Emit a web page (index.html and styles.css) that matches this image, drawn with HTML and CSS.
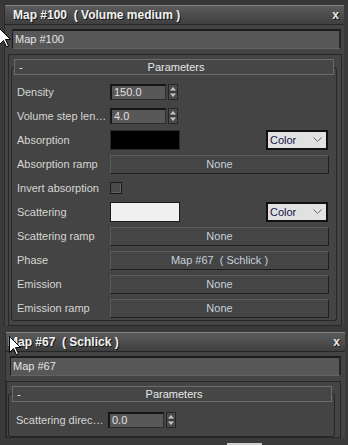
FILE: index.html
```html
<!DOCTYPE html>
<html lang="en">
<head>
    <meta charset="UTF-8">
    <title>Map #100 ( Volume medium )</title>
    <link rel="stylesheet" href="styles.css">
</head>
<body>

    <div class="top-strip"></div>

    <div class="window">
        <div class="titlebar">
            <span class="title">Map #100  ( Volume medium )</span>
            <span class="close">x</span>
        </div>
        <div class="name-field">Map #100</div>

        <div class="panel">
            <div class="rollout">
                <div class="rollout-head">
                    <span class="collapse">-</span>
                    <span class="rollout-title">Parameters</span>
                </div>
                <div class="rows">
                    <div class="param-row">
                        <span class="label">Density</span>
                        <div class="spinner">
                            <span class="num-field">150.0</span>
                            <span class="arrows"><svg width="8" height="14" viewBox="0 0 8 14"><path d="M4 2 L7 5.5 L1 5.5 Z M1 8.5 L7 8.5 L4 12 Z" fill="#c4c4c4"/><line x1="0" y1="7" x2="8" y2="7" stroke="#2a2a2a"/></svg></span>
                        </div>
                    </div>
                    <div class="param-row">
                        <span class="label">Volume step len…</span>
                        <div class="spinner">
                            <span class="num-field">4.0</span>
                            <span class="arrows"><svg width="8" height="14" viewBox="0 0 8 14"><path d="M4 2 L7 5.5 L1 5.5 Z M1 8.5 L7 8.5 L4 12 Z" fill="#c4c4c4"/><line x1="0" y1="7" x2="8" y2="7" stroke="#2a2a2a"/></svg></span>
                        </div>
                    </div>
                    <div class="param-row">
                        <span class="label">Absorption</span>
                        <div class="color-pick">
                            <span class="swatch black"></span>
                            <span class="dropdown">Color<svg width="9" height="6" viewBox="0 0 9 6"><polyline points="0.5,0.5 4.5,4.5 8.5,0.5" fill="none" stroke="#6a6a6a"/></svg></span>
                        </div>
                    </div>
                    <div class="param-row">
                        <span class="label">Absorption ramp</span>
                        <span class="map-btn">None</span>
                    </div>
                    <div class="param-row">
                        <span class="label">Invert absorption</span>
                        <span class="check"></span>
                    </div>
                    <div class="param-row">
                        <span class="label">Scattering</span>
                        <div class="color-pick">
                            <span class="swatch white"></span>
                            <span class="dropdown">Color<svg width="9" height="6" viewBox="0 0 9 6"><polyline points="0.5,0.5 4.5,4.5 8.5,0.5" fill="none" stroke="#6a6a6a"/></svg></span>
                        </div>
                    </div>
                    <div class="param-row">
                        <span class="label">Scattering ramp</span>
                        <span class="map-btn">None</span>
                    </div>
                    <div class="param-row">
                        <span class="label">Phase</span>
                        <span class="map-btn">Map #67  ( Schlick )</span>
                    </div>
                    <div class="param-row">
                        <span class="label">Emission</span>
                        <span class="map-btn">None</span>
                    </div>
                    <div class="param-row">
                        <span class="label">Emission ramp</span>
                        <span class="map-btn">None</span>
                    </div>
                </div>
            </div>
        </div>
    </div>

    <div class="window second">
        <div class="titlebar">
            <span class="title">Map #67  ( Schlick )</span>
            <span class="close">x</span>
        </div>
        <div class="name-field">Map #67</div>

        <div class="panel">
            <div class="rollout">
                <div class="rollout-head">
                    <span class="collapse">-</span>
                    <span class="rollout-title">Parameters</span>
                </div>
                <div class="rows">
                    <div class="param-row">
                        <span class="label">Scattering direc…</span>
                        <div class="spinner">
                            <span class="num-field">0.0</span>
                            <span class="arrows"><svg width="8" height="14" viewBox="0 0 8 14"><path d="M4 2 L7 5.5 L1 5.5 Z M1 8.5 L7 8.5 L4 12 Z" fill="#c4c4c4"/><line x1="0" y1="7" x2="8" y2="7" stroke="#2a2a2a"/></svg></span>
                        </div>
                    </div>
                </div>
            </div>
        </div>
    </div>

    <!-- mouse pointers and the edge of the window below -->
    <svg class="cursor first-cursor" width="13" height="20" viewBox="0 0 13 20"><polygon points="0.5,0.5 0.5,16.5 4.5,12.5 7.5,19 9.5,18 6.5,11.5 11.5,11.5" fill="#fff" stroke="#000"/></svg>
    <svg class="cursor second-cursor" width="13" height="20" viewBox="0 0 13 20"><polygon points="0.5,0.5 0.5,16.5 4.5,12.5 7.5,19 9.5,18 6.5,11.5 11.5,11.5" fill="#fff" stroke="#000"/></svg>
    <div class="peek"></div>

</body>
</html>
```

FILE: styles.css
```css
body {
    margin: 0;
    width: 348px;
    height: 445px;
    overflow: hidden;
    position: relative;
    background-color: #3a3a3a;
    font-family: "Liberation Sans", Arial, sans-serif;
    font-size: 11px;
    color: #d6d6d2;
}
.top-strip {
    height: 5px;
    background-color: #373737;
}
.window {
    margin: 0 4px 0 5px;
    background-color: #444;
    box-shadow: -1px 0 0 #2c2c2c;
}
.window.second {
    margin: 6px 3px 0 6px;
}
.titlebar {
    display: flex;
    align-items: center;
    justify-content: space-between;
    height: 18px;
    padding: 0 5px 0 8px;
    background: linear-gradient(#5b5b5b, #3f3f3f);
    border-top: 1px solid #828282;
    border-bottom: 1px solid #262626;
}
.second .titlebar {
    padding-left: 2px;
}
.title {
    font-size: 12px;
    font-weight: bold;
    color: #f2f2f2;
    white-space: pre;
    text-shadow: 1px 1px 0 #181818;
}
.close {
    font-size: 12px;
    font-weight: bold;
    color: #e6e6e6;
    text-shadow: 1px 1px 0 #181818;
}
.name-field {
    margin: 4px 3px 0 7px;
    height: 20px;
    box-sizing: border-box;
    padding-left: 2px;
    line-height: 17px;
    background-color: #575757;
    border-top: 2px solid #1c1c1c;
    border-left: 1px solid #1c1c1c;
    border-right: 2px solid #262626;
    border-bottom: 1px solid #626262;
    color: #e4e4e4;
}
.second .name-field {
    margin: 4px 4px 0 4px;
}
.panel {
    margin: 5px 2px 0 3px;
    padding: 0 4px 4px 2px;
    border: 1px solid #272727;
}
.second .panel {
    margin: 5px 4px 0 0;
    padding: 0 5px 0 1px;
}
.rollout {
    margin-top: 12px;
    padding: 0 2px;
    border: 1px solid #262626;
    border-radius: 3px;
}
.second .rollout {
    margin-top: 11px;
    padding: 0 2px 0 3px;
}
.rollout-head {
    margin-top: -9px;
    height: 14px;
    display: grid;
    grid-template-columns: 1fr auto 1fr;
    align-items: center;
    padding-left: 4px;
    background-color: #464646;
    border: 1px solid #6c6c6c;
    color: #e8e8e8;
}
.second .rollout-head {
    margin-top: -8px;
}
.rows {
    padding: 5px 5px 0 3px;
}
.second .rows {
    padding: 6px 5px 4px 4px;
}
.param-row {
    display: grid;
    grid-template-columns: 93px 1fr;
    align-items: center;
    height: 24px;
}
.second .param-row {
    grid-template-columns: 92px 1fr;
}
.label {
    white-space: nowrap;
}
.spinner {
    display: flex;
    align-items: center;
    gap: 2px;
}
.num-field {
    width: 56px;
    height: 16px;
    box-sizing: border-box;
    padding-left: 2px;
    line-height: 13px;
    background-color: #585858;
    border-top: 2px solid #151515;
    border-left: 2px solid #151515;
    border-right: 1px solid #2c2c2c;
    border-bottom: 1px solid #2c2c2c;
    color: #e0e0e0;
}
.arrows {
    width: 10px;
    height: 16px;
    box-sizing: border-box;
    display: flex;
    align-items: center;
    justify-content: center;
    background-color: #4c4c4c;
    border: 1px solid #242424;
}
.color-pick {
    display: flex;
    align-items: center;
    justify-content: space-between;
    padding-right: 1px;
}
.swatch {
    width: 70px;
    height: 20px;
    box-sizing: border-box;
    border: 1px solid #2a2a2a;
}
.swatch.black {
    background-color: #000;
}
.swatch.white {
    background-color: #f0f0f0;
    border-color: #1a1a1a;
}
.dropdown {
    width: 62px;
    height: 20px;
    box-sizing: border-box;
    display: flex;
    align-items: center;
    justify-content: space-between;
    padding: 0 4px 0 2px;
    background-color: #e1e1e1;
    border: 2px solid #111;
    color: #14144a;
}
.map-btn {
    height: 19px;
    box-sizing: border-box;
    line-height: 17px;
    text-align: center;
    white-space: pre;
    background-color: #454545;
    border: 1px solid;
    border-color: #5c5c5c #1e1e1e #1e1e1e #5c5c5c;
    color: #c6d0dc;
}
.check {
    width: 12px;
    height: 12px;
    box-sizing: border-box;
    background-color: #4a4a4a;
    border: 1px solid #1b1b1b;
    box-shadow: inset -1px -1px 0 #626262;
}
.cursor {
    position: absolute;
}
.first-cursor {
    left: -1px;
    top: 28px;
}
.second-cursor {
    left: 9px;
    top: 336px;
}
.peek {
    position: absolute;
    left: 227px;
    top: 443px;
    width: 35px;
    height: 2px;
    background-color: #cfcfcf;
}
```
